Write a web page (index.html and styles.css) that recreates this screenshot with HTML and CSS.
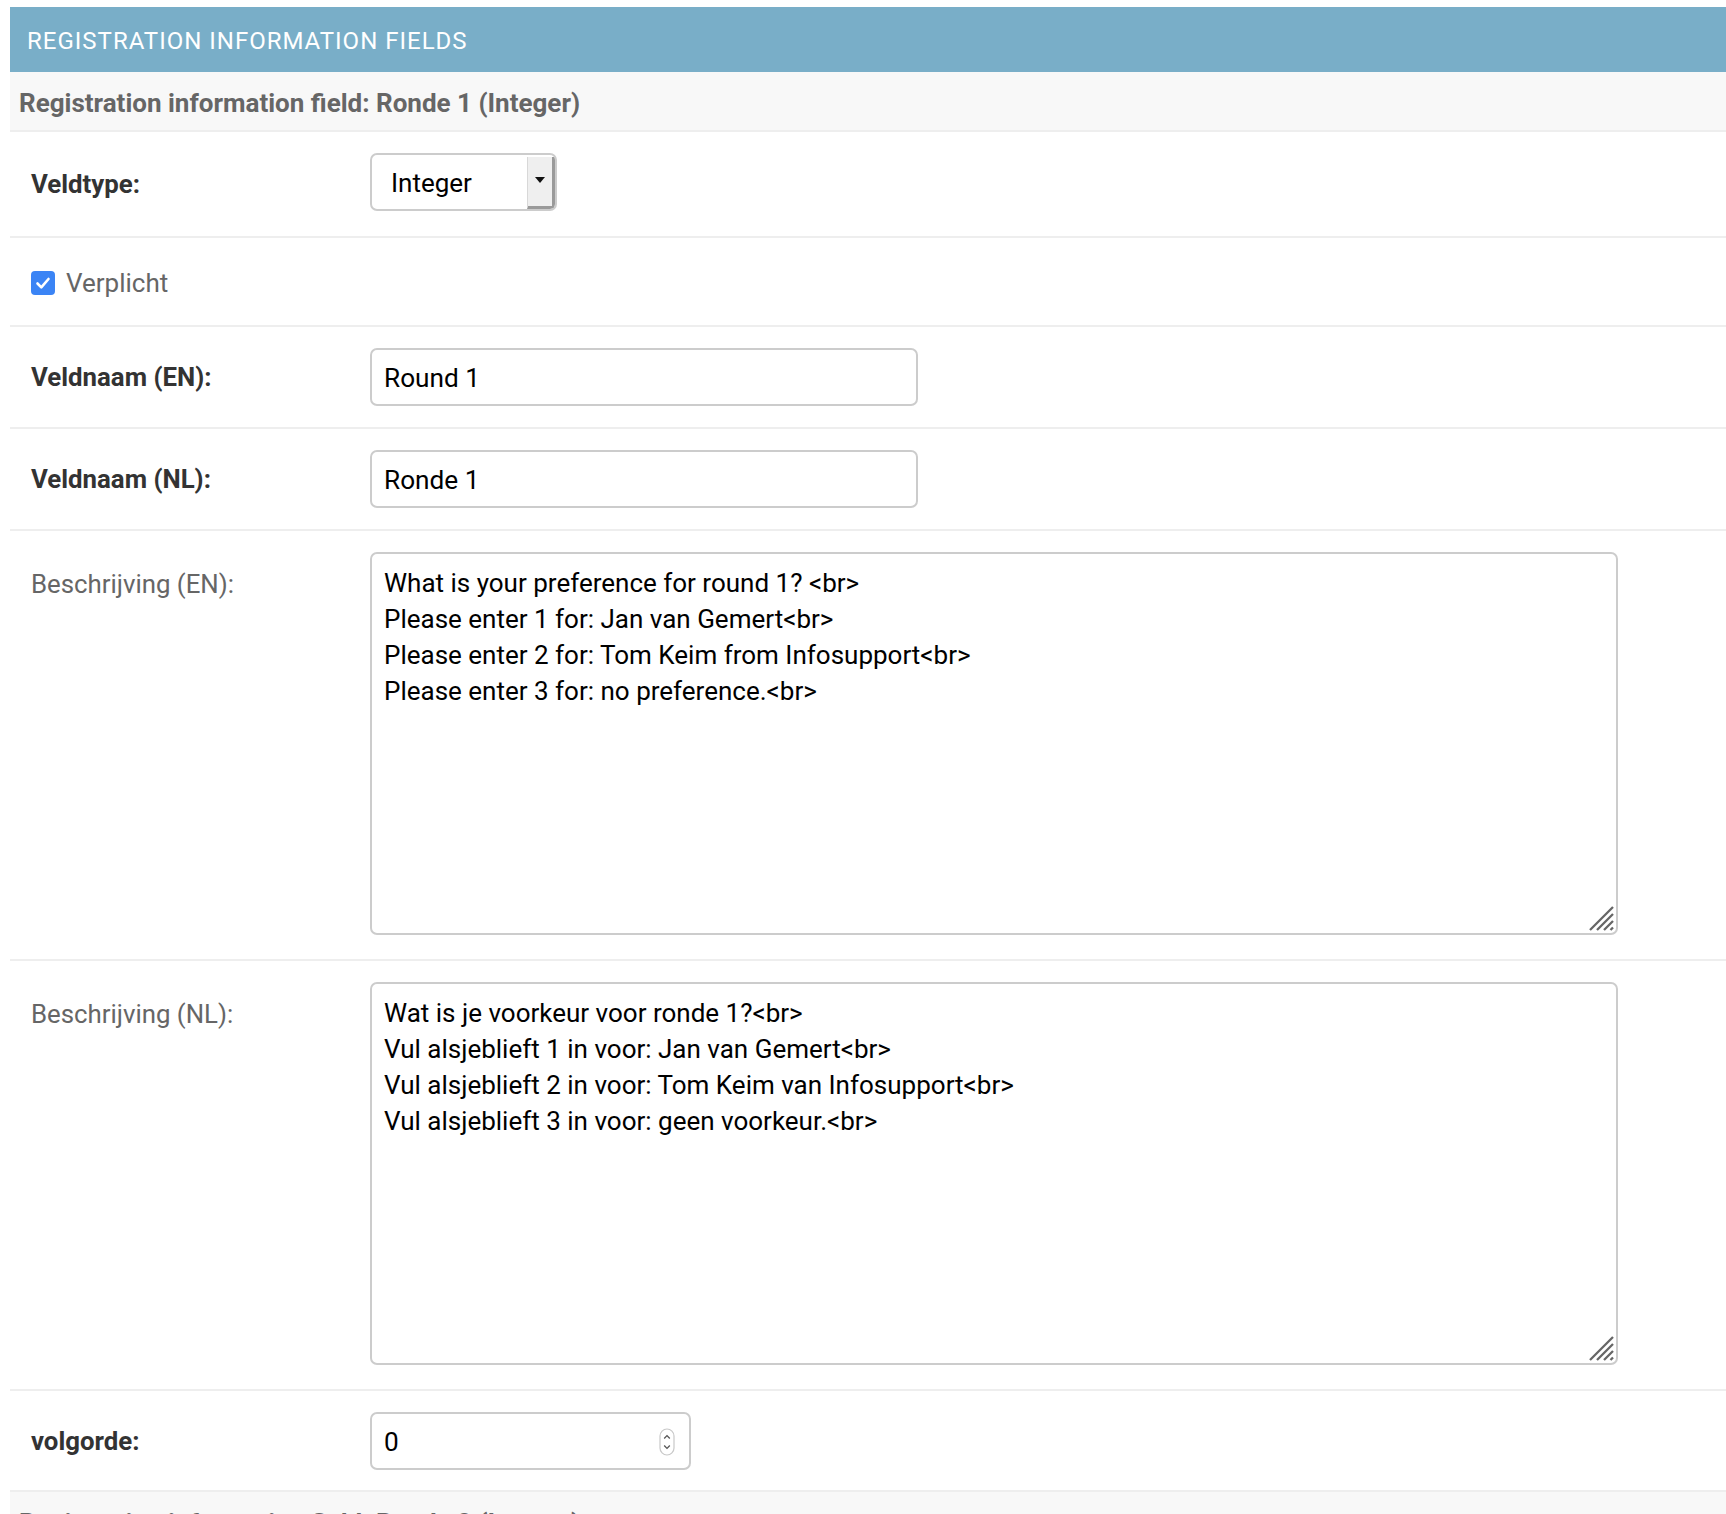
FILE: index.html
```html
<!DOCTYPE html>
<html lang="nl">
<head>
<meta charset="utf-8">
<title>Registration information fields</title>
<link rel="stylesheet" href="styles.css">
</head>
<body>
<div class="module">
  <h2 class="module-title">Registration information fields</h2>

  <div class="inline-item">
    <h3 class="item-title">Registration information field: Ronde 1 (Integer)</h3>

    <div class="form-row row-select">
      <label class="label required label-select">Veldtype:</label>
      <div class="select">
        <span class="select-value">Integer</span>
        <span class="select-arrow"><span class="tri"></span></span>
      </div>
    </div>

    <div class="form-row row-check">
      <span class="checkbox">
        <svg viewBox="0 0 24 24" width="24" height="24"><path d="M6.5 12.5 L10.3 16.3 L17.5 8" fill="none" stroke="#fff" stroke-width="2.6" stroke-linecap="round" stroke-linejoin="round"/></svg>
      </span>
      <span class="check-label">Verplicht</span>
    </div>

    <div class="form-row">
      <label class="label required">Veldnaam (EN):</label>
      <input class="text-input" type="text" value="Round 1">
    </div>

    <div class="form-row">
      <label class="label required">Veldnaam (NL):</label>
      <input class="text-input" type="text" value="Ronde 1">
    </div>

    <div class="form-row row-area">
      <label class="label optional">Beschrijving (EN):</label>
      <div class="area-wrap">
        <textarea class="area">What is your preference for round 1? &lt;br&gt;
Please enter 1 for: Jan van Gemert&lt;br&gt;
Please enter 2 for: Tom Keim from Infosupport&lt;br&gt;
Please enter 3 for: no preference.&lt;br&gt;</textarea>
        <svg class="grip" viewBox="0 0 28 28" width="28" height="28"><path d="M26 3 L3 26 M26 10 L10 26 M26 17 L17 26 M26 23.5 L23.5 26" stroke="#666" stroke-width="2.3" fill="none"/></svg>
      </div>
    </div>

    <div class="form-row row-area">
      <label class="label optional">Beschrijving (NL):</label>
      <div class="area-wrap">
        <textarea class="area">Wat is je voorkeur voor ronde 1?&lt;br&gt;
Vul alsjeblieft 1 in voor: Jan van Gemert&lt;br&gt;
Vul alsjeblieft 2 in voor: Tom Keim van Infosupport&lt;br&gt;
Vul alsjeblieft 3 in voor: geen voorkeur.&lt;br&gt;</textarea>
        <svg class="grip" viewBox="0 0 28 28" width="28" height="28"><path d="M26 3 L3 26 M26 10 L10 26 M26 17 L17 26 M26 23.5 L23.5 26" stroke="#666" stroke-width="2.3" fill="none"/></svg>
      </div>
    </div>

    <div class="form-row row-last">
      <label class="label required">volgorde:</label>
      <div class="number-wrap">
        <span class="number-value">0</span>
        <span class="spinner">
          <svg viewBox="0 0 16 28" width="16" height="28"><rect x="1" y="1" width="14" height="26" rx="7" fill="#fff" stroke="#c8c8c8" stroke-width="1.2"/><path d="M5.2 10.5 L8 7.6 L10.8 10.5 M5.2 17.5 L8 20.4 L10.8 17.5" fill="none" stroke="#555" stroke-width="1.3"/></svg>
        </span>
      </div>
    </div>
  </div>

  <div class="inline-item">
    <h3 class="item-title">Registration information field: Ronde 2 (Integer)</h3>
  </div>
</div>
</body>
</html>
```

FILE: styles.css
```css
html, body {
  margin: 0;
  padding: 0;
  background: #fff;
}

body {
  font-family: Roboto, "Liberation Sans", Arial, sans-serif;
  color: #333;
  overflow: hidden;
}

.module {
  margin: 7px 0 0 10px;
}

.module-title {
  margin: 0;
  height: 65px;
  box-sizing: border-box;
  padding: 21px 17px 0;
  background: #79aec8;
  color: #fff;
  font-weight: 400;
  font-size: 24px;
  line-height: 27px;
  letter-spacing: 1px;
  text-transform: uppercase;
}

.item-title {
  margin: 0;
  height: 60px;
  box-sizing: border-box;
  padding: 15px 9px 0;
  background: #f8f8f8;
  border-bottom: 2px solid #eee;
  color: #666;
  font-size: 26px;
  line-height: 32px;
  font-weight: 700;
}

.form-row {
  display: flex;
  align-items: center;
  padding: 21px 21px 21px;
  border-bottom: 2px solid #eee;
}

.row-select {
  padding: 21px 21px 25px;
}

.row-check {
  height: 89px;
  box-sizing: border-box;
  padding: 2px 21px 0;
}

.row-area {
  align-items: flex-start;
  padding: 21px 21px 24px;
}

.row-last {
  padding: 21px 21px 20px;
}

.label {
  flex: 0 0 339px;
  font-size: 25.8px;
  line-height: 32px;
}

.label.required {
  font-weight: 700;
  color: #333;
}

.label-select {
  padding-top: 3px;
}

.label.optional {
  font-weight: 400;
  color: #666;
  padding-top: 16px;
}

.select {
  display: flex;
  width: 187px;
  height: 58px;
  box-sizing: border-box;
  border: 2px solid #ccc;
  border-radius: 7px;
  background: #fff;
  overflow: hidden;
}

.select-value {
  flex: 1;
  padding: 2px 0 0 19px;
  font-size: 26px;
  line-height: 52px;
  color: #000;
}

.select-arrow {
  width: 28px;
  margin: 2px 0 0;
  display: flex;
  align-items: flex-start;
  justify-content: center;
  padding-top: 20px;
  box-sizing: border-box;
  background: #efefef;
  border-left: 1px solid #d8d8d8;
  border-right: 3px solid #9a9a9a;
  border-bottom: 3px solid #9a9a9a;
  border-bottom-right-radius: 4px;
}

.tri {
  width: 0;
  height: 0;
  border-left: 5px solid transparent;
  border-right: 5px solid transparent;
  border-top: 6px solid #111;
}

.checkbox {
  width: 24px;
  height: 24px;
  border-radius: 4px;
  background: #3b84f5;
  display: block;
  margin-right: 11px;
}

.checkbox svg {
  display: block;
}

.check-label {
  font-size: 26px;
  color: #666;
  line-height: 32px;
}

.text-input {
  width: 548px;
  height: 58px;
  box-sizing: border-box;
  margin: 0;
  padding: 2px 12px 0;
  border: 2px solid #ccc;
  border-radius: 7px;
  font-family: Roboto, "Liberation Sans", Arial, sans-serif;
  font-size: 26.2px;
  color: #000;
  background: #fff;
  outline: none;
}

.area-wrap {
  position: relative;
  width: 1248px;
  height: 383px;
}

.area {
  display: block;
  width: 100%;
  height: 100%;
  box-sizing: border-box;
  margin: 0;
  padding: 11px 12px;
  border: 2px solid #ccc;
  border-radius: 7px;
  font-family: Roboto, "Liberation Sans", Arial, sans-serif;
  font-size: 26px;
  line-height: 36px;
  color: #000;
  resize: none;
  overflow: hidden;
  background: #fff;
  outline: none;
}

.grip {
  position: absolute;
  right: 3px;
  bottom: 3px;
}

.number-wrap {
  width: 321px;
  height: 58px;
  box-sizing: border-box;
  border: 2px solid #ccc;
  border-radius: 7px;
  display: flex;
  align-items: center;
  padding: 2px 14px 0 12px;
  background: #fff;
}

.number-value {
  flex: 1;
  font-size: 26.2px;
  color: #000;
}

.spinner svg {
  display: block;
}
```
